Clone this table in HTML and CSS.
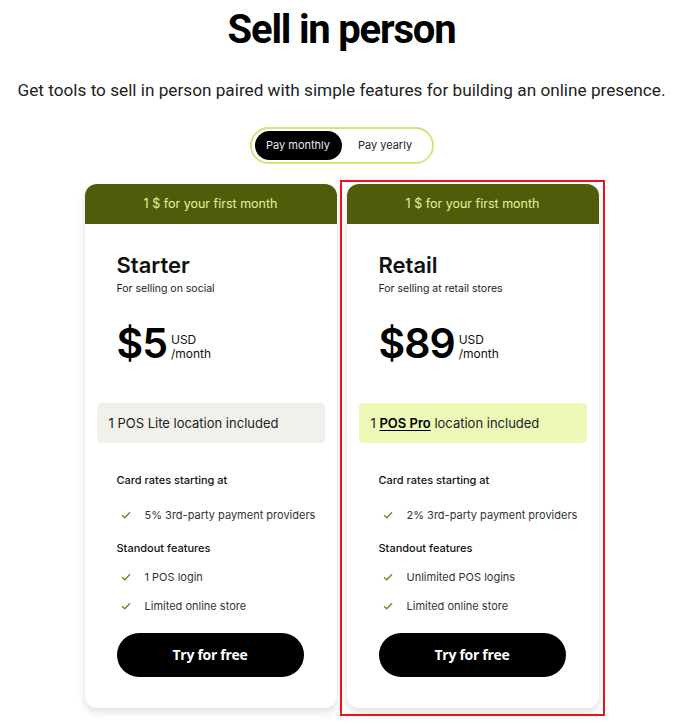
FILE: index.html
```html
<!DOCTYPE html>
<html lang="en">
<head>
<meta charset="utf-8">
<title>Sell in person</title>
<link rel="stylesheet" href="styles.css">
</head>
<body>
<main class="page">
  <h1 class="title">Sell in person</h1>
  <p class="lead">Get tools to sell in person paired with simple features for building an online presence.</p>
  <div class="toggle">
    <span class="toggle-opt active">Pay monthly</span>
    <span class="toggle-opt">Pay yearly</span>
  </div>
  <div class="plans">
    <section class="card">
      <div class="card-head">1 $ for your first month</div>
      <div class="card-body">
        <h2 class="plan-name">Starter</h2>
        <p class="plan-desc">For selling on social</p>
        <div class="price-row">
          <span class="price">$5</span>
          <span class="price-unit">USD<br>/month</span>
        </div>
        <div class="loc-box">1 POS Lite location included</div>
        <h3 class="feat-title first">Card rates starting at</h3>
        <ul class="feat-list rates">
          <li><svg class="check" viewBox="0 0 10 8" width="10" height="8"><path d="M1 4.2 L3.8 6.8 L9 1.2" fill="none" stroke="#6f8a23" stroke-width="1.4"/></svg>5% 3rd-party payment providers</li>
        </ul>
        <h3 class="feat-title">Standout features</h3>
        <ul class="feat-list">
          <li><svg class="check" viewBox="0 0 10 8" width="10" height="8"><path d="M1 4.2 L3.8 6.8 L9 1.2" fill="none" stroke="#6f8a23" stroke-width="1.4"/></svg>1 POS login</li>
          <li><svg class="check" viewBox="0 0 10 8" width="10" height="8"><path d="M1 4.2 L3.8 6.8 L9 1.2" fill="none" stroke="#6f8a23" stroke-width="1.4"/></svg>Limited online store</li>
        </ul>
        <a class="cta" href="#">Try for free</a>
      </div>
    </section>
    <section class="card highlighted">
      <div class="card-head">1 $ for your first month</div>
      <div class="card-body">
        <h2 class="plan-name">Retail</h2>
        <p class="plan-desc">For selling at retail stores</p>
        <div class="price-row">
          <span class="price">$89</span>
          <span class="price-unit">USD<br>/month</span>
        </div>
        <div class="loc-box lime">1 <a class="loc-link" href="#">POS Pro</a> location included</div>
        <h3 class="feat-title first">Card rates starting at</h3>
        <ul class="feat-list rates">
          <li><svg class="check" viewBox="0 0 10 8" width="10" height="8"><path d="M1 4.2 L3.8 6.8 L9 1.2" fill="none" stroke="#6f8a23" stroke-width="1.4"/></svg>2% 3rd-party payment providers</li>
        </ul>
        <h3 class="feat-title">Standout features</h3>
        <ul class="feat-list">
          <li><svg class="check" viewBox="0 0 10 8" width="10" height="8"><path d="M1 4.2 L3.8 6.8 L9 1.2" fill="none" stroke="#6f8a23" stroke-width="1.4"/></svg>Unlimited POS logins</li>
          <li><svg class="check" viewBox="0 0 10 8" width="10" height="8"><path d="M1 4.2 L3.8 6.8 L9 1.2" fill="none" stroke="#6f8a23" stroke-width="1.4"/></svg>Limited online store</li>
        </ul>
        <a class="cta" href="#">Try for free</a>
      </div>
    </section>
  </div>
</main>
</body>
</html>
```

FILE: styles.css
```css
* { box-sizing: border-box; }
html, body { margin: 0; padding: 0; background: #fff; }
body {
  font-family: Inter, "Noto Sans", sans-serif;
  color: #111;
  width: 683px;
  height: 724px;
  overflow: hidden;
}
.page {
  display: flex;
  flex-direction: column;
  align-items: center;
}
.title {
  margin: 6px 0 0;
  font-family: Roboto, Inter, sans-serif;
  font-size: 40px;
  line-height: 48px;
  font-weight: 700;
  letter-spacing: -1.2px;
  color: #000;
}
.lead {
  margin: 24px 0 0;
  font-family: Roboto, Inter, sans-serif;
  font-size: 17.2px;
  line-height: 24px;
  color: #222;
  white-space: nowrap;
}
.toggle {
  margin-top: 25px;
  width: 184px;
  height: 37px;
  border: 2px solid #d6e27a;
  border-radius: 19px;
  display: flex;
  align-items: center;
  padding: 0 3px;
}
.toggle-opt {
  font-size: 11px;
  height: 29px;
  line-height: 29px;
  color: #222;
  flex: 1;
  text-align: center;
}
.toggle-opt.active {
  flex: 0 0 87px;
  background: #000;
  color: #e9e9e9;
  border-radius: 15px;
}
.plans {
  margin-top: 20px;
  display: flex;
  gap: 10px;
}
.card {
  position: relative;
  width: 252px;
  height: 524px;
  background: #fff;
  border-radius: 12px;
  box-shadow: 0 4px 9px rgba(0, 0, 0, 0.13);
}
.highlighted::after {
  content: "";
  position: absolute;
  top: -4px;
  left: -7px;
  right: -6px;
  bottom: -8px;
  border: 2px solid #e8141c;
  pointer-events: none;
}
.card-head {
  height: 40px;
  background: #4f5d0b;
  color: #e6f39a;
  border-radius: 12px 12px 0 0;
  font-size: 12.5px;
  line-height: 40px;
  text-align: center;
}
.card-body {
  padding: 0 12px;
  display: flex;
  flex-direction: column;
}
.plan-name {
  margin: 27px 0 0 20px;
  font-size: 22px;
  line-height: 28px;
  font-weight: 600;
  color: #111;
}
.plan-desc {
  margin: 3px 0 0 20px;
  font-size: 10.5px;
  line-height: 14px;
  color: #222;
}
.price-row {
  margin: 25px 0 0 20px;
  display: flex;
  align-items: flex-end;
}
.price {
  font-size: 41px;
  line-height: 44px;
  font-weight: 600;
  letter-spacing: -1px;
  color: #000;
}
.price-unit {
  margin-left: 4px;
  margin-bottom: 4px;
  font-size: 12px;
  line-height: 14px;
  color: #111;
}
.loc-box {
  margin-top: 38px;
  height: 40px;
  border-radius: 4px;
  background: #f1f1ec;
  padding: 0 12px;
  font-size: 13px;
  line-height: 40px;
  color: #222;
}
.loc-box.lime { background: #ebf8b6; }
.loc-link {
  color: #000;
  font-weight: 600;
  text-decoration: underline;
  text-underline-offset: 2px;
}
.feat-title {
  margin: 17px 0 0 20px;
  font-size: 11px;
  line-height: 16px;
  font-weight: 500;
  color: #111;
}
.feat-title.first { margin-top: 29px; }
.feat-list {
  list-style: none;
  margin: 13px 0 0 20px;
  padding: 0;
  display: flex;
  flex-direction: column;
  gap: 13px;
}
.feat-list.rates { margin-top: 19px; }
.feat-list li {
  display: flex;
  align-items: center;
  font-size: 11px;
  line-height: 16px;
  color: #333;
}
.check {
  margin: 0 14px 0 4px;
  flex: none;
}
.cta {
  margin: 19px 21px 0 20px;
  height: 44px;
  border-radius: 22px;
  background: #000;
  color: #fff;
  font-family: "Open Sans", sans-serif;
  font-weight: 700;
  font-size: 14px;
  line-height: 44px;
  text-align: center;
  text-decoration: none;
  letter-spacing: -0.3px;
}
```
